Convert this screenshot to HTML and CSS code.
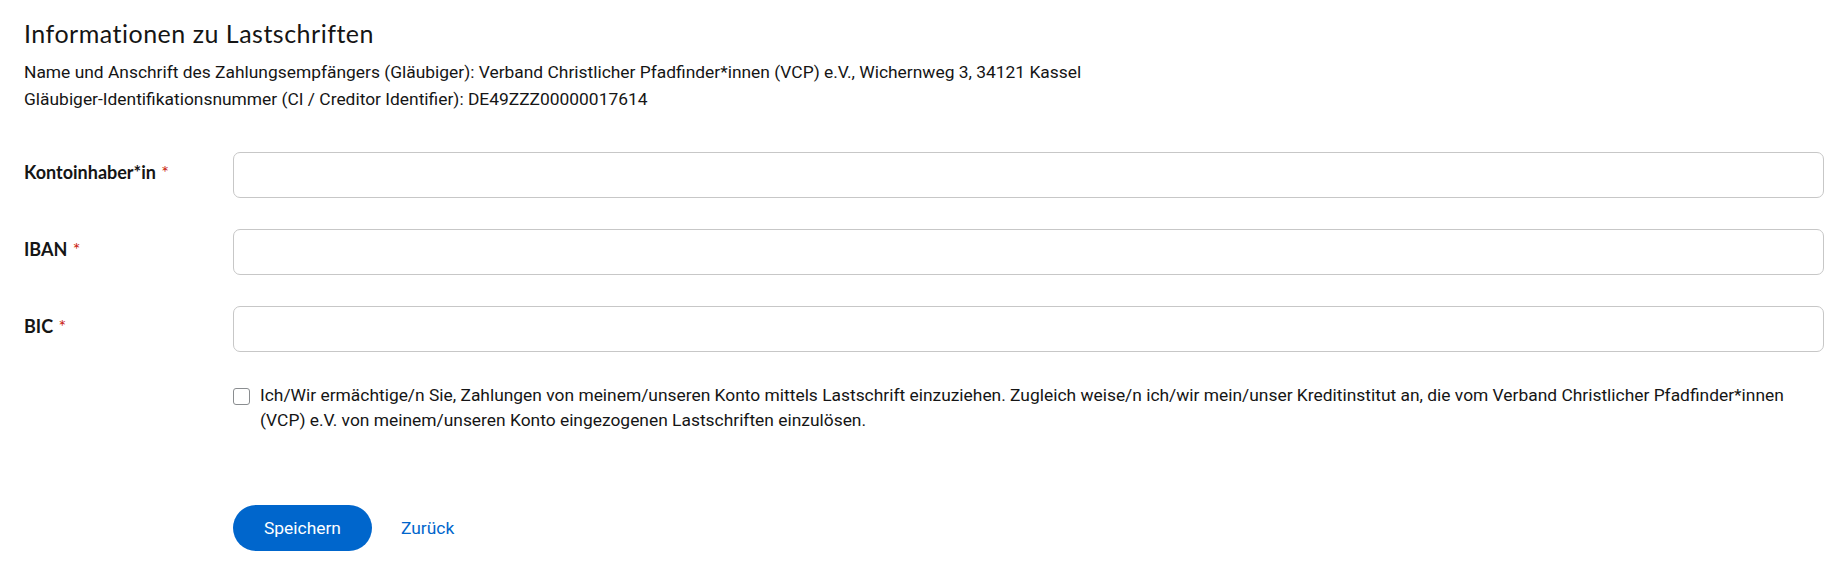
FILE: index.html
```html
<!DOCTYPE html>
<html lang="de">
<head>
<meta charset="utf-8">
<title>Informationen zu Lastschriften</title>
<link rel="stylesheet" href="styles.css">
</head>
<body>
<main class="page">
  <h1 class="title">Informationen zu Lastschriften</h1>
  <div class="info">
    <p>Name und Anschrift des Zahlungsempfängers (Gläubiger): Verband Christlicher Pfadfinder*innen (VCP) e.V., Wichernweg 3, 34121 Kassel</p>
    <p>Gläubiger-Identifikationsnummer (CI / Creditor Identifier): DE49ZZZ00000017614</p>
  </div>
  <form class="form">
    <label class="label" for="owner">Kontoinhaber*in <span class="req">*</span></label>
    <input class="input" id="owner" type="text">
    <label class="label" for="iban">IBAN <span class="req">*</span></label>
    <input class="input" id="iban" type="text">
    <label class="label" for="bic">BIC <span class="req">*</span></label>
    <input class="input" id="bic" type="text">
    <div class="check">
      <span class="box"></span>
      <span class="check-text">Ich/Wir ermächtige/n Sie, Zahlungen von meinem/unseren Konto mittels Lastschrift einzuziehen. Zugleich weise/n ich/wir mein/unser Kreditinstitut an, die vom Verband Christlicher Pfadfinder*innen (VCP) e.V. von meinem/unseren Konto eingezogenen Lastschriften einzulösen.</span>
    </div>
    <div class="actions">
      <button class="btn" type="button">Speichern</button>
      <a class="link" href="#">Zurück</a>
    </div>
  </form>
</main>
</body>
</html>
```
FILE: styles.css
```css
html, body {
  margin: 0;
  padding: 0;
  background: #ffffff;
}
body {
  font-family: Roboto, "Liberation Sans", sans-serif;
  font-size: 17.4px;
  color: #151515;
}
.page {
  padding: 17px 21px 0 24px;
}
.title {
  margin: 0;
  font-family: Lato, "Liberation Sans", sans-serif;
  font-weight: 400;
  font-size: 25px;
  line-height: 32px;
  letter-spacing: 0.5px;
}
.info {
  margin-top: 10px;
}
.info p {
  margin: 0;
  line-height: 27px;
}
.form {
  margin-top: 39px;
  display: grid;
  grid-template-columns: 209px 1fr;
  row-gap: 31px;
}
.label {
  font-family: Lato, "Liberation Sans", sans-serif;
  font-weight: 700;
  font-size: 18px;
  line-height: 24px;
  padding-top: 8px;
}
.req {
  color: #c9190b;
  font-weight: 400;
  margin-left: 1px;
}
.input {
  box-sizing: border-box;
  height: 46px;
  width: 100%;
  border: 1px solid #c7c7c7;
  border-radius: 7px;
  background: #fff;
  font: inherit;
  padding: 0 12px;
  margin: 0;
}
.check {
  grid-column: 2;
  display: flex;
  align-items: flex-start;
  gap: 10px;
}
.box {
  flex: none;
  box-sizing: border-box;
  width: 17px;
  height: 17px;
  margin-top: 5px;
  border: 1px solid #8a8d90;
  border-radius: 3px;
  background: #fff;
}
.check-text {
  line-height: 25px;
}
.actions {
  grid-column: 2;
  margin-top: 41px;
  display: flex;
  align-items: center;
}
.btn {
  height: 46px;
  padding: 0 31px;
  border: none;
  border-radius: 23px;
  background: #0066cc;
  color: #fff;
  font: inherit;
}
.link {
  margin-left: 29px;
  color: #0066cc;
  text-decoration: none;
}
```
